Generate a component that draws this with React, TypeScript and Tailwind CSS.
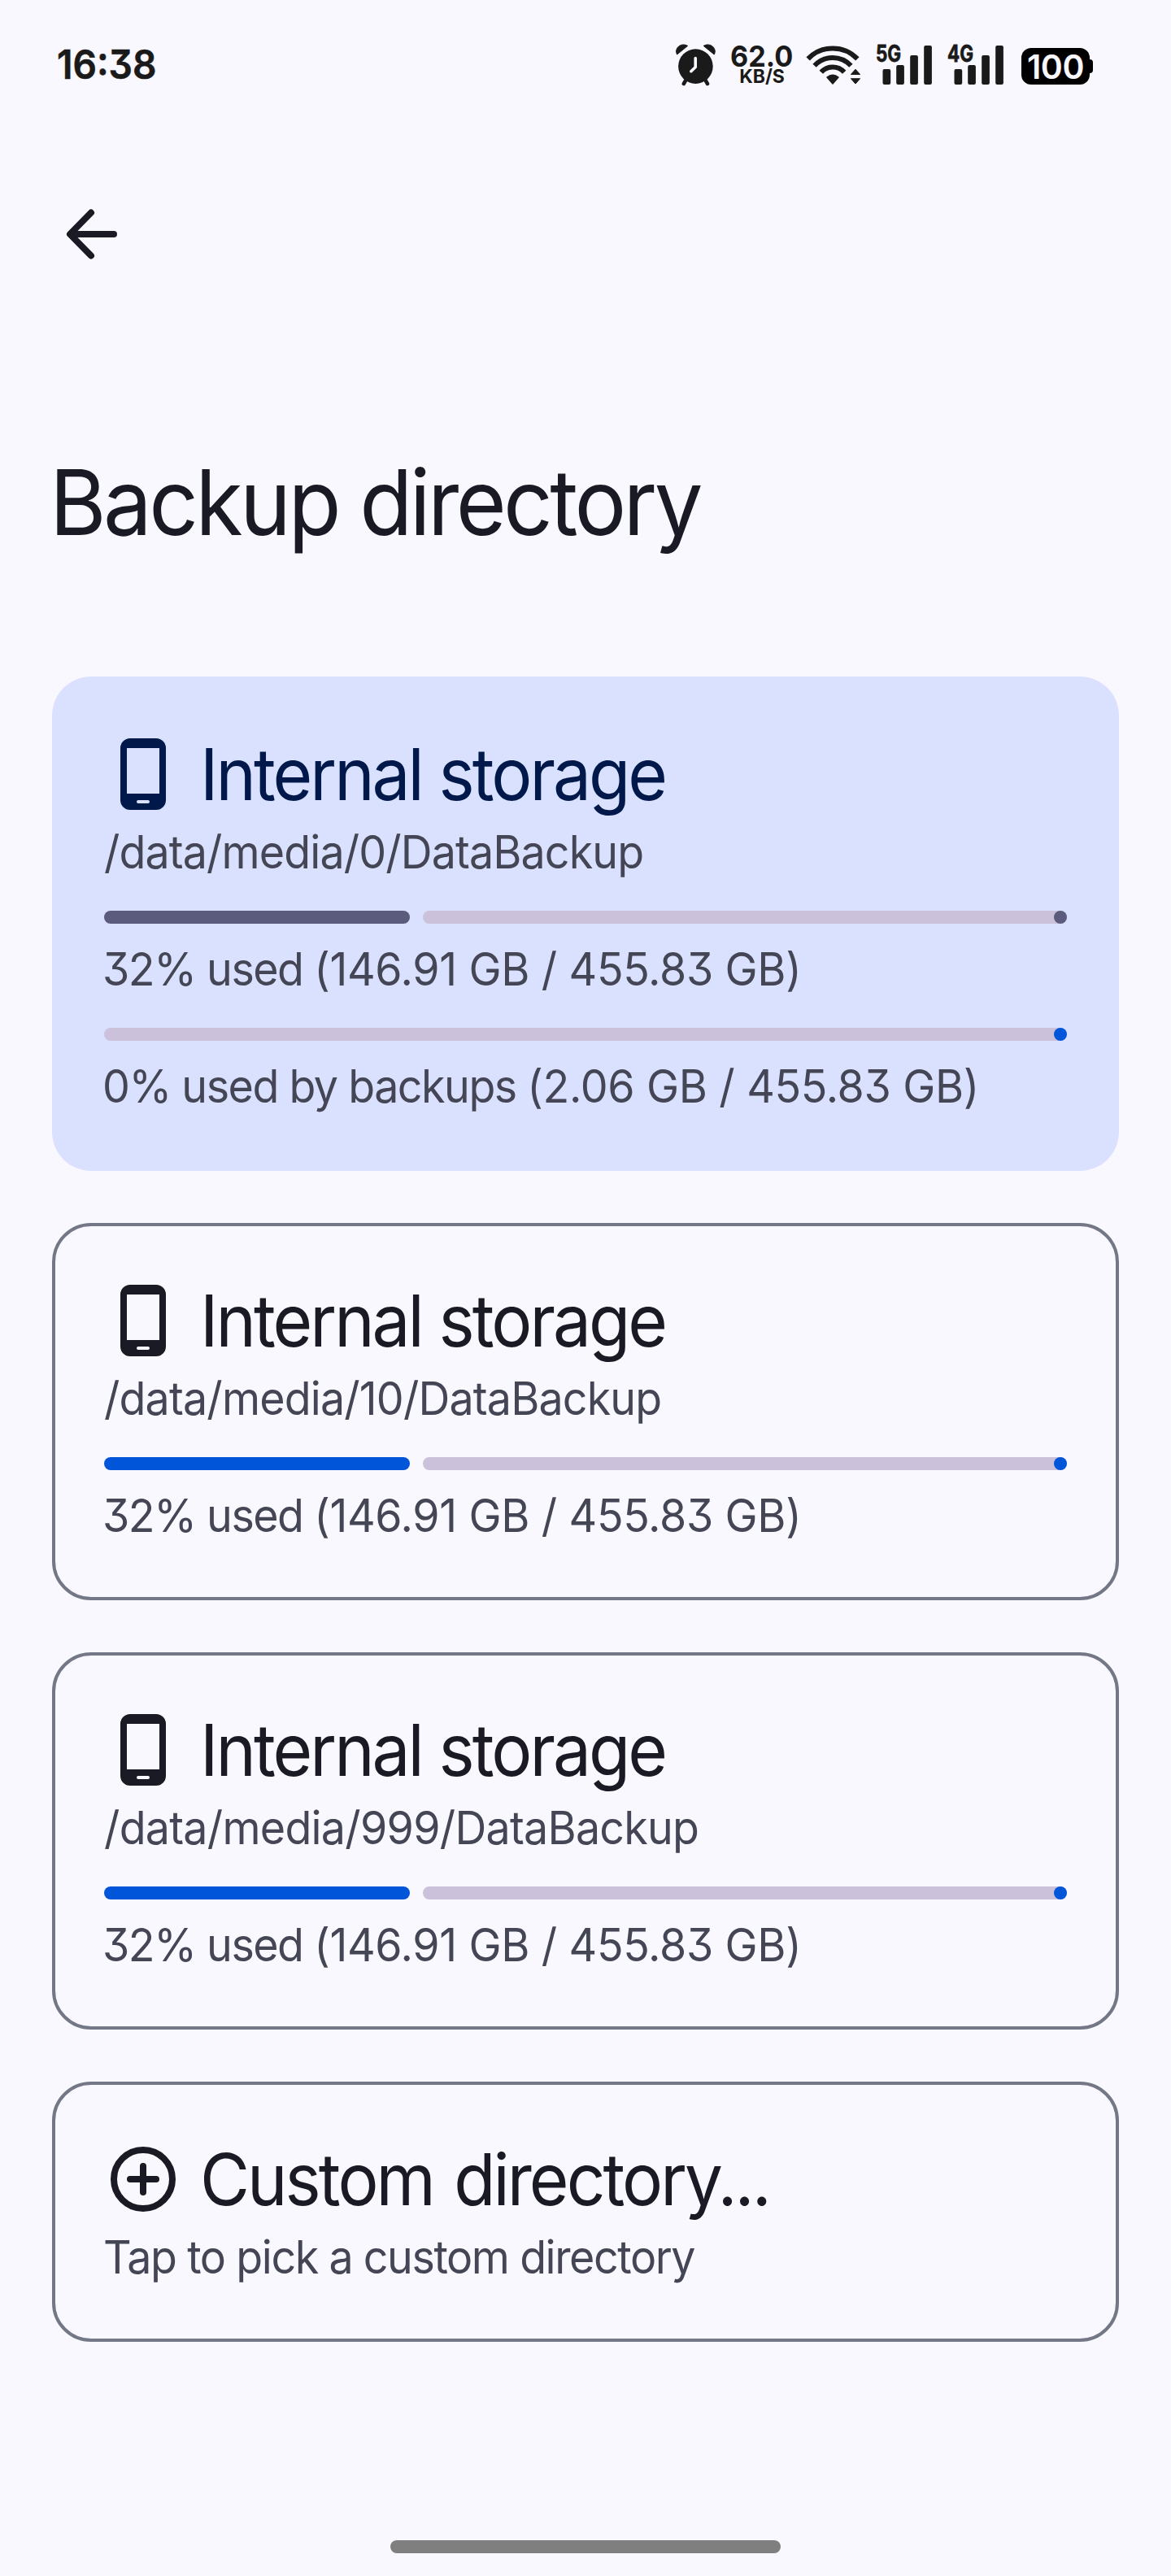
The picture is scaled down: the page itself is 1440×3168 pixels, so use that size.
import React from "react";

const FONT = "font-['Inter','Noto_Sans',sans-serif]";

function AlarmIcon() {
  return (
    <svg className="h-[52px] w-[54px]" viewBox="0 0 54 52" fill="#1a1a1a">
      <circle cx="26.4" cy="27.6" r="21.3" />
      <path d="M3.6 13C-0.4 6 8 -2.5 16.6 2.4Z" stroke="#1a1a1a" strokeWidth="1" strokeLinejoin="round" />
      <path d="M49.2 13C53.2 6 44.8 -2.5 36.2 2.4Z" stroke="#1a1a1a" strokeWidth="1" strokeLinejoin="round" />
      <path d="M15 43.5L11.8 49M37.8 43.5L41 49" stroke="#1a1a1a" strokeWidth="4.5" strokeLinecap="round" />
      <path d="M26.2 17.5V28.5L20.8 33.7" fill="none" stroke="#faf8ff" strokeWidth="3.6" strokeLinecap="round" strokeLinejoin="round" />
    </svg>
  );
}

function WifiIcon() {
  return (
    <svg className="h-[52px] w-[72px]" viewBox="0 0 72 52" fill="none" stroke="#1a1a1a" strokeWidth="6">
      <path d="M4.6 18.4A42 42 0 0 1 65.4 18.4" />
      <path d="M12.6 26.7A30.5 30.5 0 0 1 57.4 26.7" />
      <path d="M20.8 34.8A19 19 0 0 1 49.2 34.8" />
      <path d="M28 41Q35 35.5 42 41L35 49Z" fill="#1a1a1a" strokeWidth="1.5" strokeLinejoin="round" />
      <path d="M63 31.2L68.6 37.5H57.4ZM63 49L68.6 42.7H57.4Z" fill="#1a1a1a" strokeWidth="1" strokeLinejoin="round" />
    </svg>
  );
}

function Signal({ label }: { label: string }) {
  return (
    <div className="relative h-[52px] w-[70px]">
      <svg className="h-[52px] w-[70px]" viewBox="0 0 70 52" fill="#1a1a1a">
        <rect x="8.5" y="31" width="9.7" height="19" rx="2" />
        <rect x="25.2" y="26" width="9.7" height="24" rx="2" />
        <rect x="42.2" y="14" width="9.7" height="36" rx="2" />
        <rect x="59.2" y="2" width="9.7" height="48" rx="2" />
      </svg>
      <span className="absolute left-0 top-[2px] origin-left scale-x-[0.8] text-[28px] font-bold leading-5 [-webkit-text-stroke:0.8px_#1a1a1a]">{label}</span>
    </div>
  );
}

function StatusBar() {
  return (
    <div className="flex h-[240px] items-start pl-[70px] pr-24 pt-[54px] text-[#1a1a1a]">
      <span className="mt-px origin-left scale-x-[0.94] text-[49px] font-semibold leading-[50px] [-webkit-text-stroke:0.6px_#1a1a1a]">16:38</span>
      <div className="ml-auto flex items-start">
        <AlarmIcon />
        <div className="ml-[14px] mt-0.5 flex w-[80px] flex-col items-center">
          <span className="scale-x-[0.95] text-[36px] font-bold leading-[26px]">62.0</span>
          <span className="mt-0.5 text-[23px] font-bold leading-5">KB/S</span>
        </div>
        <div className="ml-3"><WifiIcon /></div>
        <div className="ml-4"><Signal label="5G" /></div>
        <div className="ml-[18px]"><Signal label="4G" /></div>
        <div className="ml-[21px] mt-[4.5px] flex h-[45px] items-center">
          <div className="flex h-[45px] w-[84px] items-center justify-center rounded-[12px] bg-black">
            <span className="mt-0.5 text-[41px] font-semibold leading-[45px] tracking-[-0.5px] text-[#faf8ff]">100</span>
          </div>
          <div className="h-[17px] w-1 rounded-r-[4px] bg-black" />
        </div>
      </div>
    </div>
  );
}

function PhoneIcon() {
  return (
    <svg className="h-24 w-24 shrink-0" viewBox="0 0 24 24" fill="currentColor">
      <path fillRule="evenodd" d="M8 1H16A3 3 0 0 1 19 4V20A3 3 0 0 1 16 23H8A3 3 0 0 1 5 20V4A3 3 0 0 1 8 1ZM7 4V18H17V4ZM10.5 20A.5 .5 0 0 0 10.5 21H13.5A.5 .5 0 0 0 13.5 20Z" />
    </svg>
  );
}

function AddCircleIcon() {
  return (
    <svg className="h-24 w-24 shrink-0" viewBox="0 0 24 24" fill="none" stroke="currentColor" strokeWidth="2" strokeLinecap="round">
      <circle cx="12" cy="12" r="9" />
      <path d="M12 8V16M8 12H16" />
    </svg>
  );
}

function Title({ icon, className, children }: { icon: React.ReactNode; className: string; children: string }) {
  return (
    <div className="flex h-28 items-center">
      {icon}
      <span className={`ml-[22px] origin-left scale-x-[0.95] whitespace-nowrap text-[88px] leading-[112px] ${className}`}>{children}</span>
    </div>
  );
}

function Body({ className, children }: { className: string; children: React.ReactNode }) {
  return (
    <div className="h-20">
      <span className={`block w-max origin-left scale-x-[0.96] whitespace-nowrap text-[56px] leading-[80px] text-[#444655] ${className}`}>{children}</span>
    </div>
  );
}

/* Usage label: words are set tighter than the figures that follow. */
function Usage({ label, figures }: { label: string; figures: string }) {
  return (
    <Body className="-ml-0.5 tracking-[-1.55px]">
      {label} <span className="tracking-[-0.38px]">{figures}</span>
    </Body>
  );
}

function Progress({ fill, dot }: { fill?: string; dot: string }) {
  return (
    <div className="mb-4 mt-8 flex h-4 gap-4">
      {fill && <div className={`w-[376px] rounded-full ${fill}`} />}
      <div className="flex flex-1 justify-end rounded-full bg-[#cbc1db]">
        <div className={`h-4 w-4 rounded-full ${dot}`} />
      </div>
    </div>
  );
}

const OUTLINED = "rounded-[48px] border-4 border-[#747785] p-[60px] text-[#191a24]";

export default function App() {
  return (
    <div className={`flex h-[3168px] w-[1440px] flex-col overflow-hidden bg-[#faf8ff] text-[#191a24] [font-feature-settings:'cv09'] ${FONT}`}>
      <StatusBar />
      <header>
        <svg className="ml-16 h-24 w-24" viewBox="0 0 96 96" fill="none" stroke="#191a24" strokeWidth="8" strokeLinecap="round" strokeLinejoin="round">
          <path d="M48 21.5L22 48L48 74.5M23 48H76" />
        </svg>
        <h1 className="ml-[61px] mt-[209px] w-max origin-left scale-x-[0.95] whitespace-nowrap text-[112px] leading-[144px] tracking-[-3.8px]">
          Backup directory
        </h1>
      </header>
      <main className="mt-[143px] flex flex-col gap-16 px-16">
        <section className="rounded-[48px] bg-[#dae1ff] p-16 text-[#00184a]">
          <Title icon={<PhoneIcon />} className="tracking-[-3.1px]">Internal storage</Title>
          <Body className="tracking-[-0.92px]">/data/media/0/DataBackup</Body>
          <Progress fill="bg-[#5b5b7d]" dot="bg-[#5b5b7d]" />
          <Usage label="32% used" figures="(146.91 GB / 455.83 GB)" />
          <Progress dot="bg-[#0055d8]" />
          <Usage label="0% used by backups" figures="(2.06 GB / 455.83 GB)" />
        </section>
        <section className={OUTLINED}>
          <Title icon={<PhoneIcon />} className="tracking-[-3.1px]">Internal storage</Title>
          <Body className="tracking-[-0.87px]">/data/media/10/DataBackup</Body>
          <Progress fill="bg-[#0055d8]" dot="bg-[#0055d8]" />
          <Usage label="32% used" figures="(146.91 GB / 455.83 GB)" />
        </section>
        <section className={OUTLINED}>
          <Title icon={<PhoneIcon />} className="tracking-[-3.1px]">Internal storage</Title>
          <Body className="tracking-[-0.77px]">/data/media/999/DataBackup</Body>
          <Progress fill="bg-[#0055d8]" dot="bg-[#0055d8]" />
          <Usage label="32% used" figures="(146.91 GB / 455.83 GB)" />
        </section>
        <section className={OUTLINED}>
          <Title icon={<AddCircleIcon />} className="tracking-[-3.1px] [word-spacing:5px]">Custom directory...</Title>
          <Body className="-ml-px tracking-[-1.5px]">Tap to pick a custom directory</Body>
        </section>
      </main>
      <div className="mb-7 mt-auto h-4 w-[480px] self-center rounded-full bg-[#7f7f7f]" />
    </div>
  );
}
